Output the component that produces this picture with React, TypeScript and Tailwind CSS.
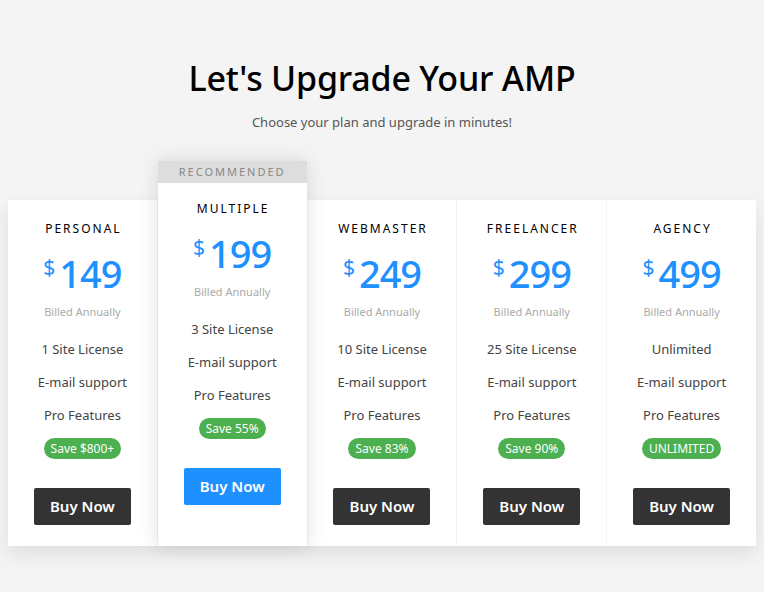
import React from 'react';

interface Plan {
  name: string;
  price: string;
  features: string[];
  badge: string;
  recommended?: boolean;
}

const plans: Plan[] = [
  { name: 'PERSONAL', price: '149', features: ['1 Site License', 'E-mail support', 'Pro Features'], badge: 'Save $800+' },
  { name: 'MULTIPLE', price: '199', features: ['3 Site License', 'E-mail support', 'Pro Features'], badge: 'Save 55%', recommended: true },
  { name: 'WEBMASTER', price: '249', features: ['10 Site License', 'E-mail support', 'Pro Features'], badge: 'Save 83%' },
  { name: 'FREELANCER', price: '299', features: ['25 Site License', 'E-mail support', 'Pro Features'], badge: 'Save 90%' },
  { name: 'AGENCY', price: '499', features: ['Unlimited', 'E-mail support', 'Pro Features'], badge: 'UNLIMITED' },
];

const PlanBody: React.FC<{ plan: Plan }> = ({ plan }) => (
  <div className="flex flex-col items-center">
    <h3 className="pl-[2px] text-[12px] leading-[18px] tracking-[2px] text-black">{plan.name}</h3>
    <div className="mt-[15px] flex items-start text-[#1e90ff]">
      <span className="text-[21px] leading-[28px] mr-[4px]">$</span>
      <span className="text-[38px] leading-[40px] font-medium tracking-[-1px]">{plan.price}</span>
    </div>
    <p className="mt-[11px] text-[11px] leading-[16px] text-[#aaa]">Billed Annually</p>
    <ul className="mt-[19px] flex flex-col items-center gap-[13px] text-[13px] leading-[20px] text-[#444]">
      {plan.features.map((f) => (
        <li key={f}>{f}</li>
      ))}
    </ul>
    <span className="mt-[13px] rounded-full bg-[#4caf50] px-[7px] py-[2px] text-[12px] leading-[17px] text-white">
      {plan.badge}
    </span>
    <button
      className={`mt-[29px] h-[37px] w-[97px] rounded-[2px] text-[15px] font-semibold text-white ${
        plan.recommended ? 'bg-[#1e90ff]' : 'bg-[#333]'
      }`}
    >
      Buy Now
    </button>
  </div>
);

export default function App() {
  return (
    <div className="min-h-[592px] bg-[#f4f4f4] font-['Noto_Sans','Open_Sans',sans-serif]">
      <div className="pt-[54px] text-center">
        <h1 className="text-[34px] leading-[48px] font-medium tracking-[-0.2px] text-black">Let's Upgrade Your AMP</h1>
        <p className="mt-[10px] text-[13px] leading-[20px] text-[#555]">Choose your plan and upgrade in minutes!</p>
      </div>

      <div className="mt-[68px] px-[8px]">
        <div className="flex gap-px shadow-[0_8px_18px_rgba(0,0,0,0.09)]">
          {plans.map((plan) =>
            plan.recommended ? (
              <div
                key={plan.name}
                className="relative z-10 -mt-[39px] flex-1 bg-white shadow-[0_0_18px_rgba(0,0,0,0.13)]"
              >
                <div className="bg-[#ddd] py-[3px] text-center text-[11px] leading-[16px] tracking-[2px] text-[#888]">
                  RECOMMENDED
                </div>
                <div className="pt-[17px] pb-[41px]">
                  <PlanBody plan={plan} />
                </div>
              </div>
            ) : (
              <div key={plan.name} className="flex-1 bg-white pt-[20px] pb-[21px]">
                <PlanBody plan={plan} />
              </div>
            )
          )}
        </div>
      </div>
    </div>
  );
}
